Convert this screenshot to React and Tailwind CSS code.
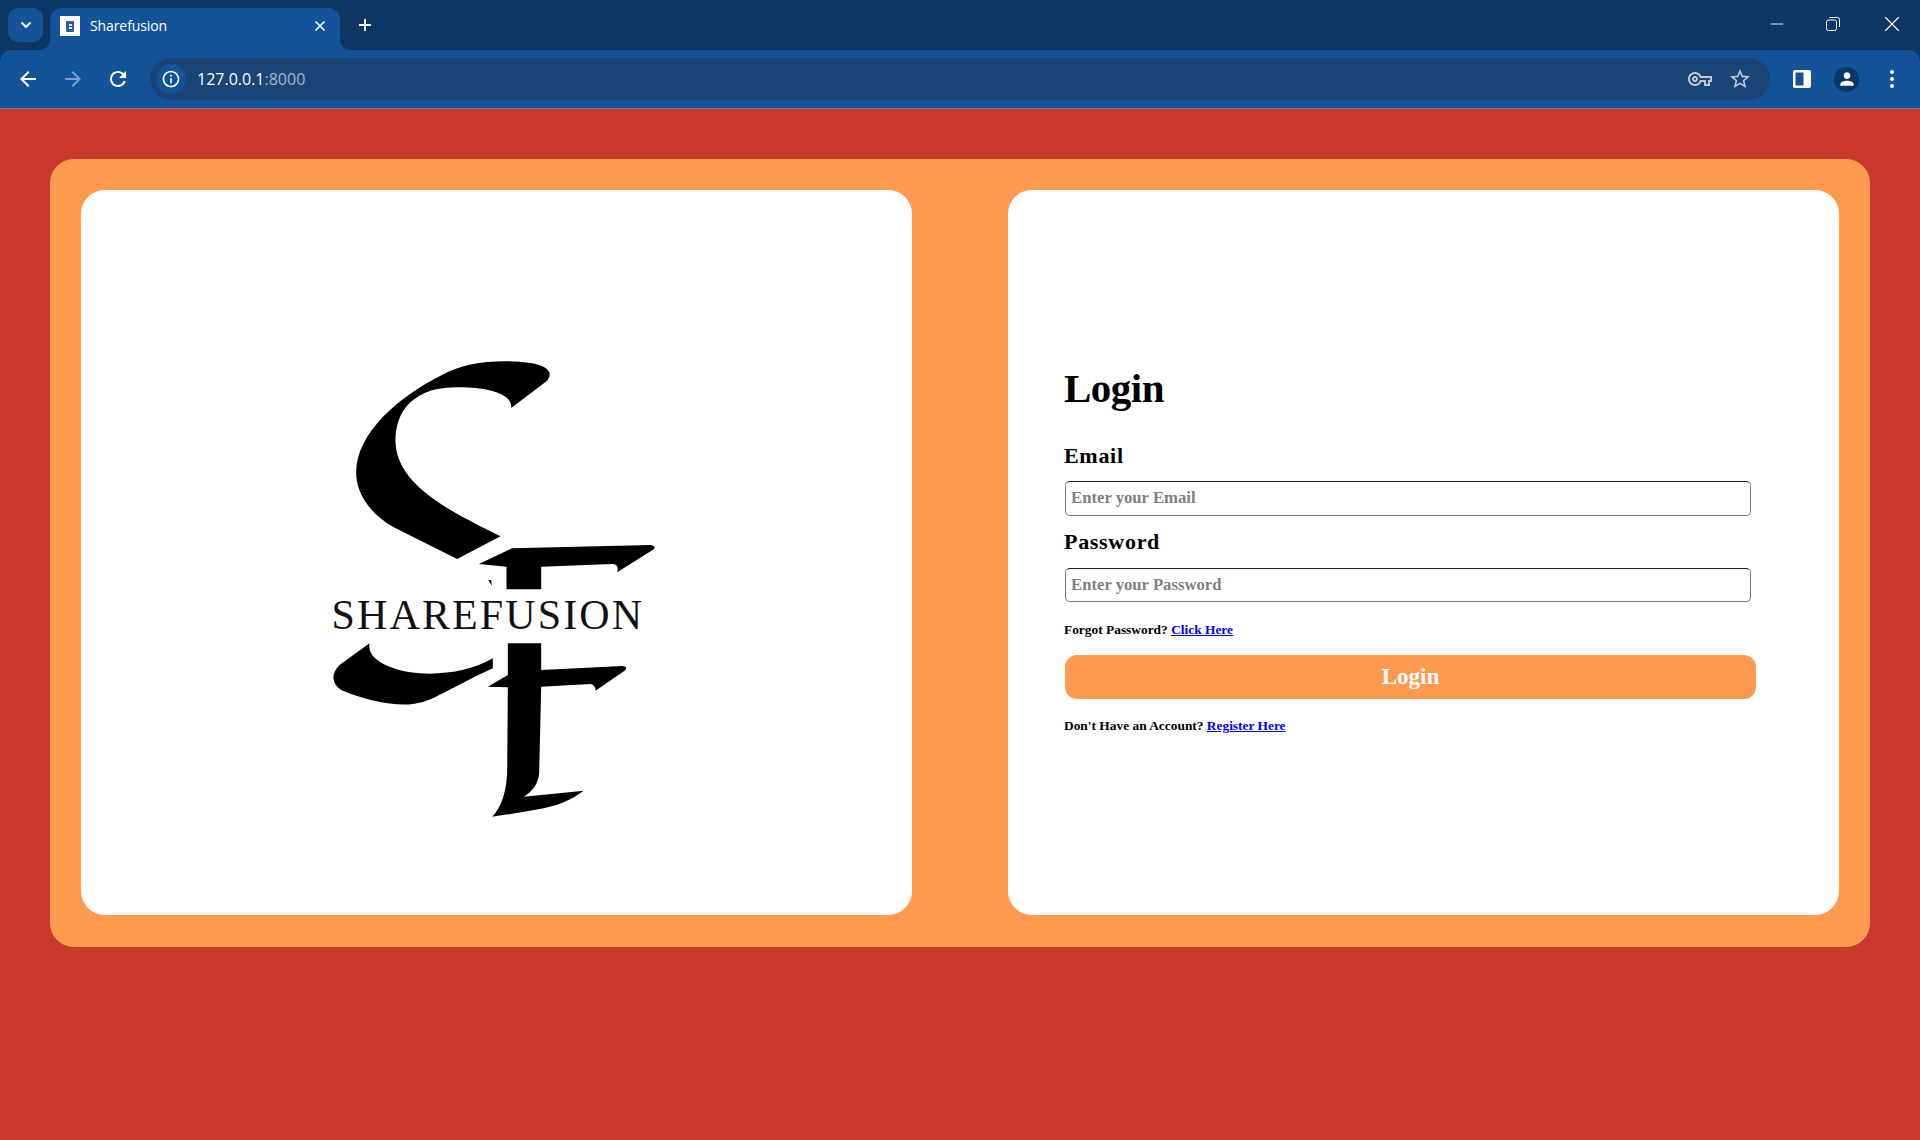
import { ChevronDown, Plus, X, Minus } from 'lucide-react';

const serif = 'font-["Liberation_Serif",serif]';

function Mat({ d, className }) {
  return (
    <svg viewBox="0 0 24 24" fill="currentColor" className={className}>
      <path d={d} />
    </svg>
  );
}

const icons = {
  back: 'M20 11H7.83l5.59-5.59L12 4l-8 8 8 8 1.41-1.41L7.83 13H20v-2z',
  forward: 'M12 4l-1.41 1.41L16.17 11H4v2h12.17l-5.58 5.59L12 20l8-8z',
  reload: 'M17.65 6.35C16.2 4.9 14.21 4 12 4c-4.42 0-7.99 3.58-7.99 8s3.57 8 7.99 8c3.73 0 6.84-2.55 7.73-6h-2.08c-.82 2.33-3.04 4-5.65 4-3.31 0-6-2.69-6-6s2.69-6 6-6c1.66 0 3.14.69 4.22 1.78L13 11h7V4l-2.35 2.35z',
  info: 'M11 7h2v2h-2zm0 4h2v6h-2zm1-9C6.48 2 2 6.48 2 12s4.48 10 10 10 10-4.48 10-10S17.52 2 12 2zm0 18c-4.41 0-8-3.59-8-8s3.59-8 8-8 8 3.59 8 8-3.59 8-8 8z',
  star: 'M22 9.24l-7.19-.62L12 2 9.19 8.63 2 9.24l5.46 4.73L5.82 21 12 17.27 18.18 21l-1.63-7.03L22 9.24zM12 15.4l-3.76 2.27 1-4.28-3.32-2.88 4.38-.38L12 6.1l1.71 4.04 4.38.38-3.32 2.88 1 4.28L12 15.4z',
  key: 'M22 19h-6v-4h-2.68c-1.14 2.42-3.6 4-6.32 4-3.86 0-7-3.14-7-7s3.14-7 7-7c2.72 0 5.17 1.58 6.32 4H24v6h-2v4zm-4-2h2v-4h2v-2H11.94l-.23-.67C11.01 8.34 9.11 7 7 7c-2.76 0-5 2.24-5 5s2.24 5 5 5c2.11 0 4.01-1.34 4.71-3.33l.23-.67H18v4zM7 15c-1.65 0-3-1.35-3-3s1.35-3 3-3 3 1.35 3 3-1.35 3-3 3zm0-4c-.55 0-1 .45-1 1s.45 1 1 1 1-.45 1-1-.45-1-1-1z',
  person: 'M12 12c2.21 0 4-1.79 4-4s-1.79-4-4-4-4 1.79-4 4 1.79 4 4 4zm0 2c-2.67 0-8 1.34-8 4v2h16v-2c0-2.66-5.33-4-8-4z',
};

function BrowserChrome() {
  return (
    <div className='font-["Open_Sans",sans-serif] text-white'>
      {/* Tab strip */}
      <div className="h-[50px] bg-[#0c3764] flex items-end pl-2">
        <div className="w-[35px] h-[34px] mb-2 rounded-[10px] bg-[#14539a] flex items-center justify-center">
          <ChevronDown className="w-4 h-4" strokeWidth={3} />
        </div>
        <div className="relative w-[290px] h-[42px] ml-[7px] rounded-t-[12px] bg-[#14539a] flex items-center pl-[10px] pb-[6px]">
          <svg viewBox="0 0 12 12" className="absolute -left-3 bottom-0 w-3 h-3">
            <path d="M12 0 V12 H0 Q12 12 12 0 Z" fill="#14539a" />
          </svg>
          <svg viewBox="0 0 12 12" className="absolute -right-3 bottom-0 w-3 h-3">
            <path d="M0 0 V12 H12 Q0 12 0 0 Z" fill="#14539a" />
          </svg>
          <div className="w-5 h-5 bg-white flex items-center justify-center">
            <div className="w-[8px] h-[11px] rounded-[1px] bg-[#2d6098] flex flex-col items-center justify-center gap-[1px]">
              <div className="w-[3px] h-[2px] bg-[#dbe6f2]" />
              <div className="w-[3px] h-[2px] bg-[#dbe6f2]" />
            </div>
          </div>
          <span className="ml-[10px] text-[14px] leading-none tracking-[-0.1px]">Sharefusion</span>
          <X className="ml-auto mr-[12px] w-4 h-4" strokeWidth={2.5} />
        </div>
        <Plus className="ml-[16px] mb-[16px] w-[18px] h-[18px]" strokeWidth={2.5} />
        <div className="ml-auto flex items-center h-full pb-[2px]">
          <Minus className="w-5 h-5 mr-[39px]" strokeWidth={1.1} />
          <svg viewBox="0 0 14 14" fill="none" stroke="currentColor" className="w-[14px] h-[14px] mr-[39px]">
            <rect x="0.5" y="3" width="10" height="10.5" rx="2" />
            <path d="M3.5 0.5 H11.5 Q13.5 0.5 13.5 2.5 V10" />
          </svg>
          <X className="w-[26px] h-[26px] mr-[15px]" strokeWidth={1} />
        </div>
      </div>
      {/* Toolbar */}
      <div className="h-[59px] bg-[#0c3764]">
        <div className="h-full bg-[#14539a] rounded-t-[12px] border-b border-b-[#6f7f98] flex items-center pl-[16px]">
          <Mat d={icons.back} className="w-6 h-6" />
          <Mat d={icons.forward} className="w-6 h-6 ml-[21px] text-[#7c9fc8]" />
          <Mat d={icons.reload} className="w-6 h-6 ml-[21px]" />
          <div className="ml-[20px] w-[1620px] shrink-0 h-[42px] rounded-full bg-[#1a4576] flex items-center pl-[6px]">
            <div className="w-[30px] h-[30px] rounded-full bg-[#14539a] flex items-center justify-center">
              <Mat d={icons.info} className="w-5 h-5" />
            </div>
            <span className="ml-[11px] text-[16px] leading-none">
              127.0.0.1<span className="text-[#a4b5c8]">:8000</span>
            </span>
            <Mat d={icons.key} className="ml-auto w-6 h-6 text-[#c4c9d0]" />
            <Mat d={icons.star} className="ml-[16px] mr-[18px] w-6 h-6 text-[#c4c9d0]" />
          </div>
          <svg viewBox="0 0 18 18" className="ml-[23px] w-[18px] h-[18px] shrink-0">
            <rect x="0" y="0" width="18" height="18" rx="2" fill="#fff" />
            <rect x="2.5" y="2.5" width="8" height="13" fill="#14539a" />
          </svg>
          <div className="ml-[23px] w-[25px] h-[25px] shrink-0 rounded-full bg-[#0c3764] flex items-center justify-center">
            <Mat d={icons.person} className="w-5 h-5" />
          </div>
          <div className="ml-[31px] flex flex-col gap-[3px]">
            <div className="w-1 h-1 rounded-full bg-white" />
            <div className="w-1 h-1 rounded-full bg-white" />
            <div className="w-1 h-1 rounded-full bg-white" />
          </div>
        </div>
      </div>
    </div>
  );
}

function Logo() {
  return (
    <svg viewBox="-10.5 -222 1200 1725" className="w-[400px] h-[575px]">
      {/* upper S */}
      <path d="M470 660 L600 592 C480 530 290 450 285 310 C285 270 290 190 390 155 C450 135 640 140 632 207 L740 125 C760 100 740 80 690 72 C600 60 500 65 420 110 C300 170 167 280 167 400 C167 480 230 540 290 570 Z" />
      {/* upper F bar */}
      <path transform="translate(0 3)" d="M535 672 L635 625 L1050 615 Q1068 618 1060 628 L950 697 Q957 672 935 672 L722 680 L722 748 L618 748 L618 680 Z" />
      <path d="M563 722 L572 724 L574 740 Z" />
      <text
        x="93"
        y="871"
        fontSize="126"
        textLength="932"
        lengthAdjust="spacing"
        fontFamily='"Liberation Serif", serif'
        fill="#111"
      >
        SHAREFUSION
      </text>
      {/* lower S */}
      <path transform="translate(-3 3)" d="M210 910 L120 975 C95 1000 95 1030 125 1050 C190 1080 290 1100 340 1092 C400 1085 420 1060 580 985 L580 955 C520 990 440 1005 360 1000 C290 995 200 965 210 910 Z" />
      {/* lower F */}
      <path transform="translate(0 3)" d="M622 910 L722 910 L722 990 L965 978 Q985 980 972 992 L885 1052 Q885 1035 870 1032 L722 1040 L716 1300 Q712 1345 670 1370 L850 1352 Q800 1390 730 1405 Q650 1420 575 1430 Q615 1390 620 1300 L622 1042 L562 1040 L622 1005 Z" />
    </svg>
  );
}

export default function App() {
  const inputCls =
    'ml-[1px] block w-[686px] pl-[5px] pr-[6px] pb-[1px] rounded-[5px] border border-[#767676] border-t-[#1f1f1f] bg-white text-[16.7px] font-bold placeholder:text-[#808080] outline-none';
  const labelCls = 'block text-[22px] leading-[26px] font-bold tracking-[0.7px] text-black';

  return (
    <div className="h-screen bg-[#c9392b] overflow-hidden">
      <BrowserChrome />
      <div className="px-[50px] pt-[50px]">
        <div className="h-[788px] bg-[#ff9b51] rounded-[24px] pt-[31px] px-[31px] pb-[32px] flex justify-between">
          <div className="w-[831px] bg-white rounded-[24px] flex items-center justify-center">
            <Logo />
          </div>
          <div className={`w-[831px] bg-white rounded-[24px] pl-[56px] pt-[173px] ${serif}`}>
            <h1 className="text-[41px] leading-[50px] font-bold text-black tracking-[-0.5px]">Login</h1>
            <div className="mt-[30px]">
              <label className={labelCls}>Email</label>
              <input type="email" placeholder="Enter your Email" className={`mt-[12px] h-[35px] ${inputCls}`} />
            </div>
            <div className="mt-[13px]">
              <label className={labelCls}>Password</label>
              <input type="password" placeholder="Enter your Password" className={`mt-[13px] h-[34px] ${inputCls}`} />
            </div>
            <p className="mt-[19px] text-[13.4px] leading-[18px] font-bold text-black">
              Forgot Password? <a href="#" className="text-[#0000ee] underline">Click Here</a>
            </p>
            <button className="mt-[16px] ml-[1px] block w-[691px] h-[44px] rounded-[12px] bg-[#ff9b51] text-white text-[23px] font-bold">
              Login
            </button>
            <p className="mt-[18px] text-[13.4px] leading-[18px] font-bold text-black">
              Don't Have an Account? <a href="#" className="text-[#0000ee] underline">Register Here</a>
            </p>
          </div>
        </div>
      </div>
    </div>
  );
}
